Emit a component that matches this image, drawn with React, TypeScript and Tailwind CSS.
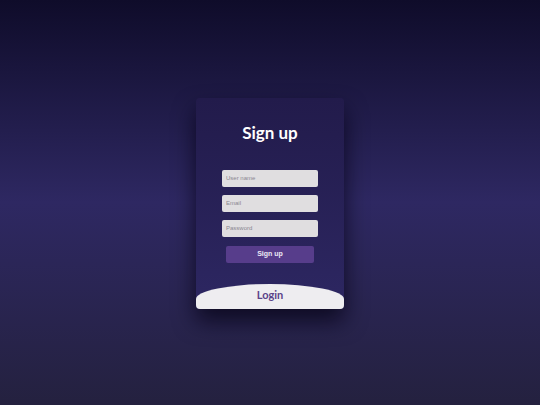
export default function App() {
    return (
        <div className="min-h-screen w-full flex items-center justify-center bg-[linear-gradient(to_bottom,#0f0c2a_0%,#2e2862_50%,#24213f_100%)] font-['Lato',sans-serif]">
            {/* Card */}
            <div className="w-[148px] h-[211px] mt-[1px] rounded-[4px] overflow-hidden flex flex-col bg-[linear-gradient(to_bottom,#221b4b,#2d2762)] shadow-[0_12px_22px_rgba(5,3,20,0.75)]">
                <h1 className="pt-[26px] text-center text-white text-[17px] font-bold leading-none">
                    Sign up
                </h1>

                <form className="mt-[29px] flex flex-col items-center gap-[8px]">
                    <input
                        placeholder="User name"
                        className="w-[96px] h-[17px] rounded-[2px] bg-[#e0dee0] px-[4px] text-[6px] font-['Liberation_Sans',sans-serif] placeholder:text-[#8a8791] outline-none"
                    />
                    <input
                        placeholder="Email"
                        className="w-[96px] h-[17px] rounded-[2px] bg-[#e0dee0] px-[4px] text-[6px] font-['Liberation_Sans',sans-serif] placeholder:text-[#8a8791] outline-none"
                    />
                    <input
                        placeholder="Password"
                        className="w-[96px] h-[17px] rounded-[2px] bg-[#e0dee0] px-[4px] text-[6px] font-['Liberation_Sans',sans-serif] placeholder:text-[#8a8791] outline-none"
                    />
                    <button
                        type="button"
                        className="w-[88px] h-[17px] mt-[1px] rounded-[2px] bg-[#573d8b] text-[#ece8f4] text-[7px] font-bold font-['Liberation_Sans',sans-serif]"
                    >
                        Sign up
                    </button>
                </form>

                {/* Login panel */}
                <div className="mt-auto h-[25px] bg-[#eeedf0] rounded-tl-[74px_15px] rounded-tr-[74px_15px] flex justify-center pt-[5px]">
                    <span className="text-[11px] font-bold text-[#5a4289] leading-none">
                        Login
                    </span>
                </div>
            </div>
        </div>
    );
}
